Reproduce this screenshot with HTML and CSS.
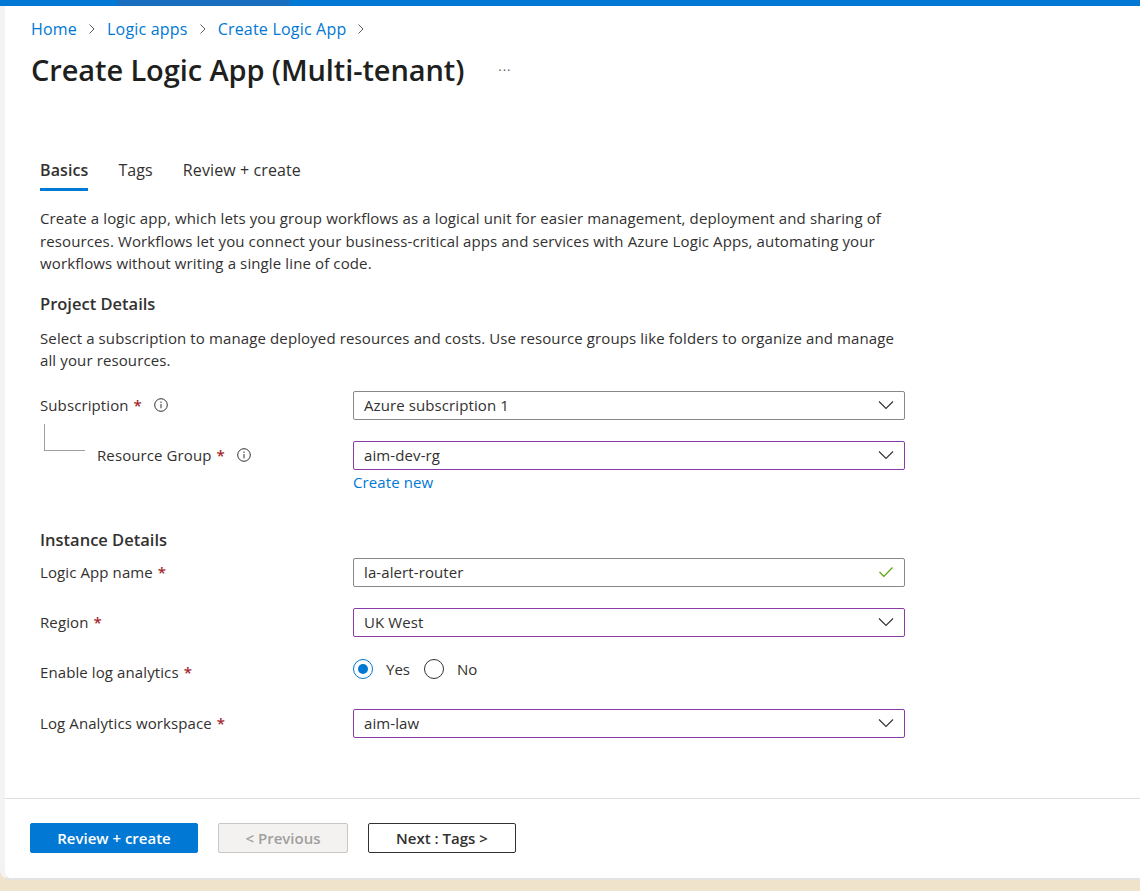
FILE: index.html
```html
<!DOCTYPE html>
<html>
<head>
<meta charset="utf-8">
<link rel="stylesheet" href="styles.css">
</head>
<body>
<div class="page">
  <div class="topbar"><div class="topbar-seg"></div></div>
  <div class="head">
    <nav class="crumbs">
      <a>Home</a><span class="chev"><svg width="8" height="12" viewBox="0 0 8 12"><path d="M1.5 1.5 L6 6 L1.5 10.5" fill="none" stroke="#605e5c" stroke-width="1"/></svg></span>
      <a>Logic apps</a><span class="chev"><svg width="8" height="12" viewBox="0 0 8 12"><path d="M1.5 1.5 L6 6 L1.5 10.5" fill="none" stroke="#605e5c" stroke-width="1"/></svg></span>
      <a>Create Logic App</a><span class="chev"><svg width="8" height="12" viewBox="0 0 8 12"><path d="M1.5 1.5 L6 6 L1.5 10.5" fill="none" stroke="#605e5c" stroke-width="1"/></svg></span>
    </nav>
    <div class="title-row">
      <h1>Create Logic App (Multi-tenant)</h1>
      <span class="more">···</span>
    </div>
  </div>

  <div class="content">
    <div class="tabs">
      <div class="tab active">Basics</div>
      <div class="tab">Tags</div>
      <div class="tab">Review + create</div>
    </div>

    <p class="desc">Create a logic app, which lets you group workflows as a logical unit for easier management, deployment and sharing of resources. Workflows let you connect your business-critical apps and services with Azure Logic Apps, automating your workflows without writing a single line of code.</p>

    <h2>Project Details</h2>
    <p class="desc">Select a subscription to manage deployed resources and costs. Use resource groups like folders to organize and manage all your resources.</p>

    <div class="row r-sub">
      <div class="label">Subscription <span class="req">*</span><span class="info"><svg width="14" height="14" viewBox="0 0 14 14"><circle cx="7" cy="7" r="6.3" fill="none" stroke="#323130" stroke-width="1"/><rect x="6.5" y="6" width="1" height="4.3" fill="#323130"/><circle cx="7" cy="4.2" r="0.7" fill="#323130"/></svg></span></div>
      <div class="field">
        <div class="select">Azure subscription 1<svg class="caret" width="16" height="10" viewBox="0 0 16 10"><path d="M1 1.5 L8 8.5 L15 1.5" fill="none" stroke="#323130" stroke-width="1.1"/></svg></div>
      </div>
    </div>

    <div class="row r-rg">
      <div class="label sub"><span class="tree"></span>Resource Group <span class="req">*</span><span class="info"><svg width="14" height="14" viewBox="0 0 14 14"><circle cx="7" cy="7" r="6.3" fill="none" stroke="#323130" stroke-width="1"/><rect x="6.5" y="6" width="1" height="4.3" fill="#323130"/><circle cx="7" cy="4.2" r="0.7" fill="#323130"/></svg></span></div>
      <div class="field">
        <div class="select purple">aim-dev-rg<svg class="caret" width="16" height="10" viewBox="0 0 16 10"><path d="M1 1.5 L8 8.5 L15 1.5" fill="none" stroke="#323130" stroke-width="1.1"/></svg></div>
        <a class="create-new">Create new</a>
      </div>
    </div>

    <h2 class="inst">Instance Details</h2>

    <div class="row r-name">
      <div class="label">Logic App name <span class="req">*</span></div>
      <div class="field">
        <div class="select">la-alert-router<svg class="check" width="16" height="12" viewBox="0 0 16 12"><path d="M1.5 6 L5.8 10.3 L14.5 1.5" fill="none" stroke="#57a300" stroke-width="1.2"/></svg></div>
      </div>
    </div>

    <div class="row r-region">
      <div class="label">Region <span class="req">*</span></div>
      <div class="field">
        <div class="select purple">UK West<svg class="caret" width="16" height="10" viewBox="0 0 16 10"><path d="M1 1.5 L8 8.5 L15 1.5" fill="none" stroke="#323130" stroke-width="1.1"/></svg></div>
      </div>
    </div>

    <div class="row r-log">
      <div class="label log-label">Enable log analytics <span class="req">*</span></div>
      <div class="field radios">
        <span class="radio on"></span><span class="rlabel">Yes</span>
        <span class="radio"></span><span class="rlabel">No</span>
      </div>
    </div>

    <div class="row r-ws">
      <div class="label">Log Analytics workspace <span class="req">*</span></div>
      <div class="field">
        <div class="select purple">aim-law<svg class="caret" width="16" height="10" viewBox="0 0 16 10"><path d="M1 1.5 L8 8.5 L15 1.5" fill="none" stroke="#323130" stroke-width="1.1"/></svg></div>
      </div>
    </div>
  </div>

  <div class="footer">
    <button class="btn primary">Review + create</button>
    <button class="btn disabled">&lt; Previous</button>
    <button class="btn outline">Next : Tags &gt;</button>
  </div>
</div>
</body>
</html>
```

FILE: styles.css
```css
html, body {
  margin: 0;
  padding: 0;
}
body {
  background: #f0e3cb;
  font-family: "Open Sans", "Noto Sans", sans-serif;
  color: #323130;
  height: 891px;
  overflow: hidden;
}
.page {
  background: #ffffff;
  height: 880px;
  box-sizing: border-box;
  border-left: 5px solid #f3f3f3;
  border-bottom: 2px solid #e3e3e3;
  border-bottom-left-radius: 10px;
  display: flex;
  flex-direction: column;
}
.topbar {
  height: 6px;
  background: #0078d4;
  display: flex;
  margin-left: -5px;
}
.topbar-seg {
  margin-left: 117px;
  width: 173px;
  background: #1a6ebf;
}
.head {
  padding: 12px 0 0 26px;
}
.crumbs {
  display: flex;
  align-items: center;
  height: 22px;
  font-size: 16px;
  letter-spacing: 0.2px;
}
.crumbs a {
  color: #0078d4;
}
.chev {
  display: inline-flex;
  padding: 0 11px 0 11px;
}
.title-row {
  display: flex;
  align-items: center;
  margin-top: 11px;
}
h1 {
  margin: 0;
  font-size: 29px;
  font-weight: 600;
  color: #201f1e;
  line-height: 38px;
  letter-spacing: -0.1px;
}
.more {
  margin-left: 34px;
  font-size: 13px;
  color: #605e5c;
  letter-spacing: 1px;
}
.content {
  padding: 0 0 0 35px;
  width: 870px;
  flex: 1;
}
.tabs {
  display: flex;
  margin-top: 70px;
  gap: 30px;
}
.tab {
  font-size: 16px;
  line-height: 22px;
  padding-bottom: 7px;
  border-bottom: 3px solid transparent;
  letter-spacing: 0.1px;
}
.tab.active {
  font-weight: 600;
  border-bottom-color: #0078d4;
}
.desc {
  font-size: 15px;
  line-height: 22.5px;
  margin: 16px 0 0 0;
  letter-spacing: 0.12px;
}
h2 {
  margin: 17px 0 0 0;
  font-size: 16.5px;
  font-weight: 600;
  line-height: 24px;
}
h2 + .desc {
  margin-top: 11px;
}
.row {
  display: flex;
  align-items: flex-start;
}
.label {
  width: 313px;
  font-size: 15px;
  line-height: 29px;
  display: flex;
  align-items: center;
  letter-spacing: 0.1px;
}
.label.sub {
  padding-left: 57px;
  width: 256px;
  position: relative;
}
.tree {
  position: absolute;
  left: 4px;
  top: -17px;
  width: 40px;
  height: 26px;
  border-left: 1px solid #a19f9d;
  border-bottom: 1px solid #a19f9d;
}
.req {
  color: #a4262c;
  margin-left: 5px;
  font-weight: 600;
}
.info {
  display: inline-flex;
  margin-left: 12px;
}
.field {
  width: 552px;
}
.select {
  height: 29px;
  box-sizing: border-box;
  border: 1px solid #8a8886;
  border-radius: 2px;
  font-size: 15px;
  line-height: 27px;
  padding: 0 0 0 10px;
  display: flex;
  align-items: center;
  justify-content: space-between;
  letter-spacing: 0.1px;
}
.select.purple {
  border-color: #8a3ca6;
}
.caret {
  margin-right: 10px;
}
.check {
  margin-right: 10px;
}
.create-new {
  display: block;
  color: #0078d4;
  font-size: 15px;
  line-height: 20px;
  margin-top: 2px;
  letter-spacing: 0.1px;
}
.r-sub { margin-top: 19px; }
.r-rg { margin-top: 21px; }
.inst { margin-top: 36px; }
.r-name { margin-top: 6px; }
.r-region { margin-top: 21px; }
.r-log { margin-top: 18px; }
.log-label { padding-top: 3px; }
.r-ws { margin-top: 22px; }
.radios {
  display: flex;
  align-items: center;
  height: 29px;
}
.radio {
  width: 20px;
  height: 20px;
  box-sizing: border-box;
  border: 1px solid #323130;
  border-radius: 50%;
  display: inline-flex;
  align-items: center;
  justify-content: center;
}
.radio.on {
  border-color: #0078d4;
}
.radio.on::after {
  content: "";
  width: 10px;
  height: 10px;
  border-radius: 50%;
  background: #0078d4;
}
.rlabel {
  font-size: 15px;
  margin-left: 13px;
  margin-right: 14px;
}
.footer {
  border-top: 1px solid #dedede;
  height: 80px;
  box-sizing: border-box;
  display: flex;
  align-items: flex-start;
  padding: 24px 0 0 25px;
  gap: 20px;
}
.btn {
  height: 30px;
  box-sizing: border-box;
  font-family: "Open Sans", "Noto Sans", sans-serif;
  font-size: 15px;
  font-weight: 600;
  border-radius: 2px;
  padding: 0;
}
.btn.primary {
  width: 168px;
  background: #0078d4;
  border: 1px solid #0078d4;
  color: #ffffff;
}
.btn.disabled {
  width: 130px;
  background: #f3f2f1;
  border: 1px solid #c8c6c4;
  color: #a19f9d;
}
.btn.outline {
  width: 148px;
  background: #ffffff;
  border: 1px solid #323130;
  color: #323130;
}
```
